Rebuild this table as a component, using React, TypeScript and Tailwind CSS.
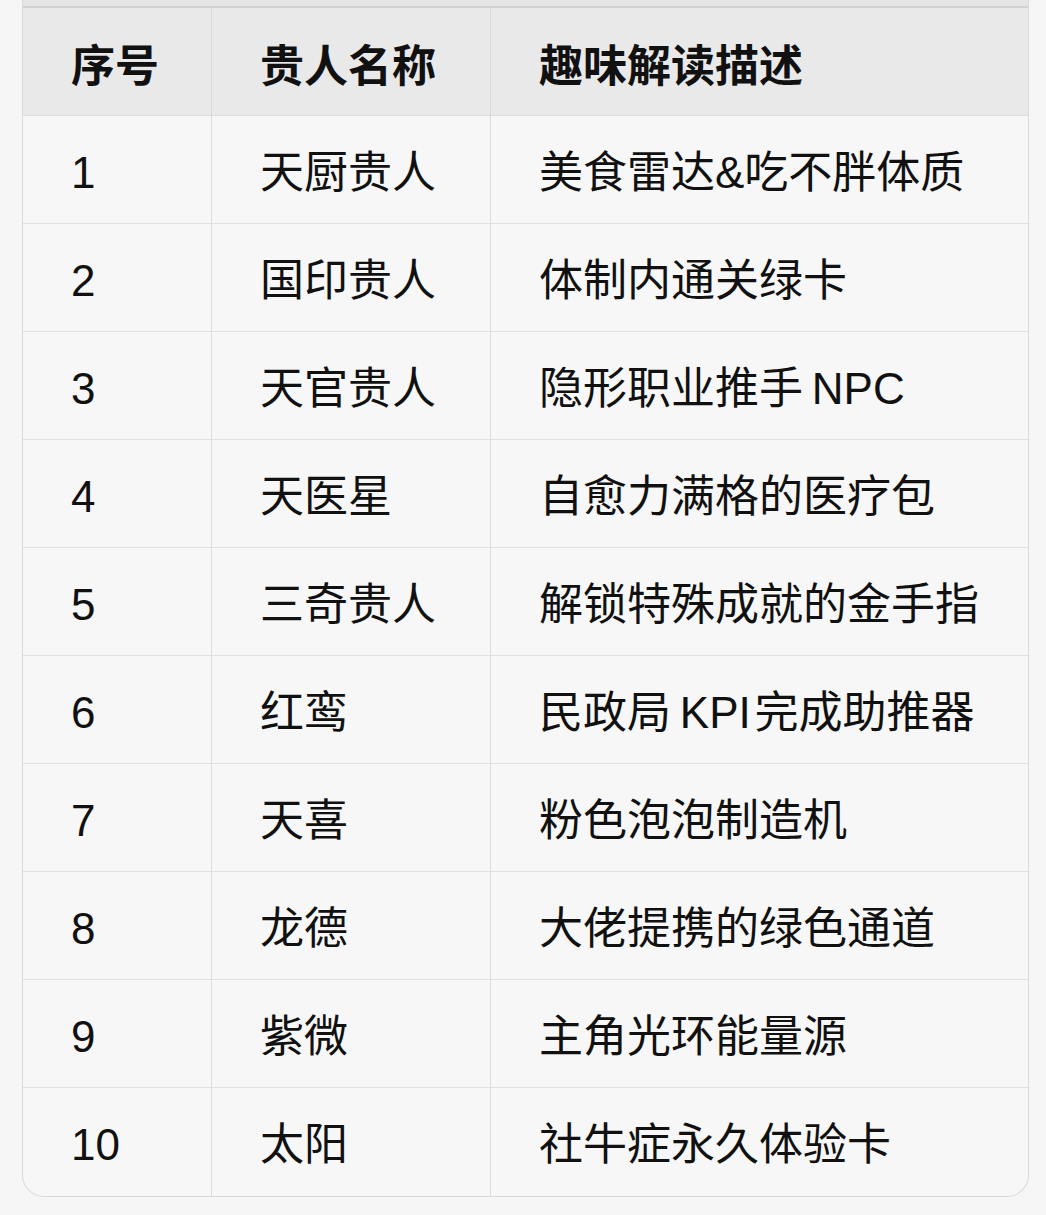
import React from 'react';

const rows: [string, string, string][] = [
  ['1', '天厨贵人', '美食雷达&吃不胖体质'],
  ['2', '国印贵人', '体制内通关绿卡'],
  ['3', '天官贵人', '隐形职业推手\u2009NPC'],
  ['4', '天医星', '自愈力满格的医疗包'],
  ['5', '三奇贵人', '解锁特殊成就的金手指'],
  ['6', '红鸾', '民政局\u2009KPI\u200A完成助推器'],
  ['7', '天喜', '粉色泡泡制造机'],
  ['8', '龙德', '大佬提携的绿色通道'],
  ['9', '紫微', '主角光环能量源'],
  ['10', '太阳', '社牛症永久体验卡'],
];

export default function App() {
  return (
    <div
      className="min-h-screen bg-[#f6f6f6] px-[22px] pb-[20px] text-[44px] text-[#111]"
      style={{ fontFamily: '"Liberation Sans", "Noto Sans CJK SC", sans-serif' }}
    >
      <div className="w-[1007px] rounded-b-[22px] border-x border-b border-[#dadada] bg-[#f7f7f7] overflow-hidden">
        {/* tail of the row above, cut off by the viewport */}
        <div className="h-[6px] bg-[#e6e6e6] border-b-2 border-[#d2d2d2] box-content" />

        {/* header */}
        <div className="grid grid-cols-[189px_279px_1fr] h-[108px] bg-[#e9e9e9] border-b border-[#dcdcdc] font-bold">
          <div className="flex items-center pl-[48px] pt-[10px] border-r border-[#d9d9d9]">序号</div>
          <div className="flex items-center pl-[48px] pt-[10px] border-r border-[#d9d9d9]">贵人名称</div>
          <div className="flex items-center pl-[48px] pt-[10px]">趣味解读描述</div>
        </div>

        {rows.map(([no, name, desc], i) => (
          <div
            key={no}
            className={`grid grid-cols-[189px_279px_1fr] h-[108px] ${i < rows.length - 1 ? 'border-b border-[#e0e0e0]' : ''}`}
          >
            <div className="flex items-center pl-[48px] pt-[6px] border-r border-[#dcdcdc]">{no}</div>
            <div className="flex items-center pl-[48px] pt-[6px] border-r border-[#dcdcdc]">{name}</div>
            <div className="flex items-center pl-[48px] pt-[6px]">{desc}</div>
          </div>
        ))}
      </div>
    </div>
  );
}
